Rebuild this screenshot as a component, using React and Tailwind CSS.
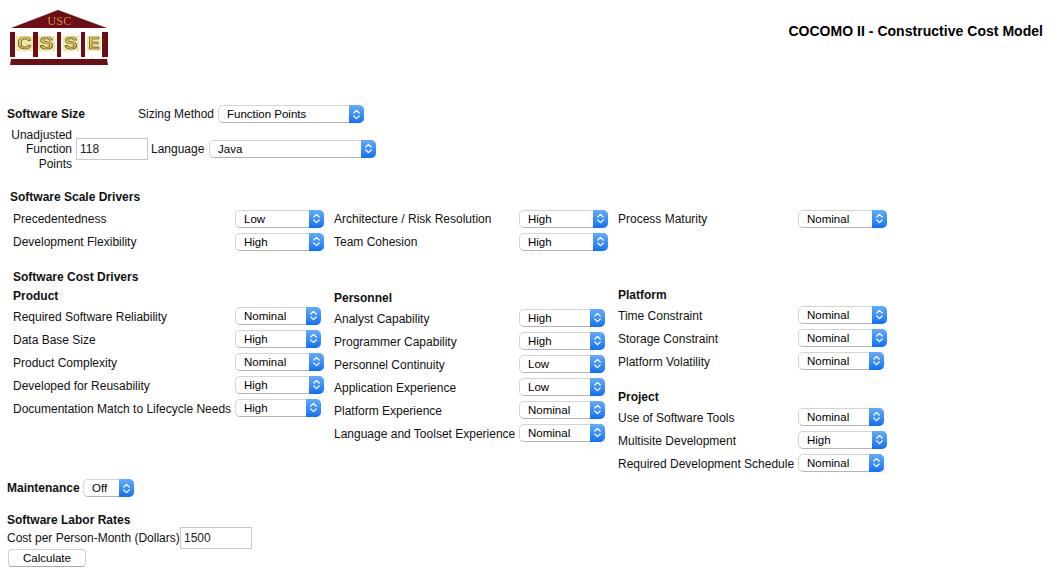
import React from "react";

const levels = ["Very Low", "Low", "Nominal", "High", "Very High"];

function Select({ value, options = levels, w = "w-[89px]", className = "" }) {
  return (
    <div className={`relative h-[18px] shrink-0 ${w} ${className}`}>
      <select
        defaultValue={value}
        className="block h-full w-full appearance-none rounded-[5px] border border-[#d4d4d4] border-b-[#b4b4b4] bg-white pl-2 text-[11.5px] text-black outline-none"
      >
        {options.map((o) => (
          <option key={o}>{o}</option>
        ))}
      </select>
      <div className="pointer-events-none absolute inset-y-0 right-0 flex w-[15px] items-center justify-center rounded-r-[5px] bg-gradient-to-b from-[#62acfb] to-[#0f6ff5]">
        <svg width="9" height="13" viewBox="0 0 9 13" fill="none" stroke="white" strokeWidth="1.3" strokeLinecap="round" strokeLinejoin="round">
          <path d="M1.8 5 L4.5 2.4 L7.2 5" />
          <path d="M1.8 8 L4.5 10.6 L7.2 8" />
        </svg>
      </div>
    </div>
  );
}

function Row({ label, value, labelW, narrow, up = true }) {
  return (
    <div className="flex h-[23px] items-center">
      <div className={`whitespace-nowrap ${labelW}`}>{label}</div>
      <Select value={value} w={narrow ? "w-[86px]" : "w-[89px]"} className={up ? "mb-[2px]" : ""} />
    </div>
  );
}

function Heading({ children, className = "" }) {
  return <div className={`h-[14px] font-bold leading-[14px] ${className}`}>{children}</div>;
}

function Logo() {
  const red = "#6d0f16";
  return (
    <svg width="100" height="58" viewBox="0 0 100 58" className="block">
      <defs>
        <filter id="soft"><feGaussianBlur stdDeviation="0.35" /></filter>
        <linearGradient id="g" x1="0" y1="0" x2="0" y2="1">
          <stop offset="0" stopColor="#f8e879" />
          <stop offset="1" stopColor="#e0b028" />
        </linearGradient>
      </defs>
      <g filter="url(#soft)">
        <path d="M1 18 L48 0 L97 18 Z" fill={red} />
        <text x="49.5" y="15" textAnchor="middle" fontFamily="'Liberation Serif', serif" fontSize="12.5" fill="#c9923a">USC</text>
        {[[0, 5], [23, 5], [47, 4], [71, 4], [92, 6]].map(([x, w]) => (
          <rect key={x} x={x} y="22" width={w} height="25" fill={red} />
        ))}
        {[[6, 17], [28, 17], [53, 16], [77, 14]].map(([x, w]) => (
          <rect key={x} x={x} y="26" width={w} height="15" fill="#f0e8a8" />
        ))}
        {[["C", 7.5, 14], ["S", 29.5, 14], ["S", 54.5, 13], ["E", 78.5, 11]].map(([c, x, len], i) => (
          <text key={i} x={x} y="39" textLength={len} lengthAdjust="spacingAndGlyphs" fontFamily="'Liberation Sans', sans-serif" fontWeight="700" fontSize="16.5" fill="url(#g)" stroke="#55512f" strokeWidth="0.7">{c}</text>
        ))}
        <path d="M1 49 L97 49 L98 55 L0 55 Z" fill={red} />
      </g>
    </svg>
  );
}

export default function App() {
  return (
    <div className="h-[573px] w-[1061px] overflow-hidden bg-white font-['Liberation_Sans',Arial,sans-serif] text-[12px] leading-[14px] text-[#111]">
      <header className="flex h-[96px] justify-between pl-[10px] pr-[18px] pt-[10px]">
        <Logo />
        <h1 className="mt-[13px] text-[14px] font-bold leading-4 tracking-[0.03px] text-black">COCOMO II - Constructive Cost Model</h1>
      </header>

      <div className="mt-[9px] flex h-[18px] items-center pl-[7px]">
        <div className="w-[131px] font-bold">Software Size</div>
        <div className="w-[80px]">Sizing Method</div>
        <Select value="Function Points" options={["Function Points", "Source Lines of Code"]} w="w-[146px]" />
      </div>

      <div className="mt-[4px] flex h-[43px] items-center">
        <div className="w-[72px] pl-[8px] pt-[2px] text-right leading-[14.5px]">Unadjusted Function Points</div>
        <input
          defaultValue="118"
          className="ml-[4px] h-[22px] w-[72px] border border-[#c8c8c8] px-[3px] text-[12px] text-[#222] outline-none"
        />
        <div className="ml-[3px] w-[58px]">Language</div>
        <Select value="Java" options={["Java", "C", "C++", "Python"]} w="w-[167px]" />
      </div>

      <Heading className="ml-[10px] mt-[19px] pt-px">Software Scale Drivers</Heading>
      <div className="mt-[4px] flex pl-[13px]">
        <div className="w-[321px]">
          <Row up={false} label="Precedentedness" value="Low" labelW="w-[222px]" />
          <Row up={false} label="Development Flexibility" value="High" labelW="w-[222px]" />
        </div>
        <div className="w-[284px]">
          <Row up={false} label="Architecture / Risk Resolution" value="High" labelW="w-[185px]" />
          <Row up={false} label="Team Cohesion" value="High" labelW="w-[185px]" />
        </div>
        <div>
          <Row up={false} label="Process Maturity" value="Nominal" labelW="w-[180px]" />
        </div>
      </div>

      <Heading className="ml-[13px] mt-[16px] pt-px">Software Cost Drivers</Heading>
      <div className="flex h-[192px] pl-[13px]">
        <div className="w-[321px] pt-[5px]">
          <Heading className="mb-[3px] pt-px">Product</Heading>
          <Row narrow label="Required Software Reliability" value="Nominal" labelW="w-[222px]" />
          <Row narrow label="Data Base Size" value="High" labelW="w-[222px]" />
          <Row label="Product Complexity" value="Nominal" labelW="w-[222px]" />
          <Row label="Developed for Reusability" value="High" labelW="w-[222px]" />
          <Row narrow label="Documentation Match to Lifecycle Needs" value="High" labelW="w-[222px]" />
        </div>
        <div className="w-[284px] pt-[7px]">
          <Heading className="mb-[3px] pt-px">Personnel</Heading>
          <Row narrow label="Analyst Capability" value="High" labelW="w-[185px]" />
          <Row narrow label="Programmer Capability" value="High" labelW="w-[185px]" />
          <Row narrow label="Personnel Continuity" value="Low" labelW="w-[185px]" />
          <Row narrow label="Application Experience" value="Low" labelW="w-[185px]" />
          <Row narrow label="Platform Experience" value="Nominal" labelW="w-[185px]" />
          <Row narrow label="Language and Toolset Experience" value="Nominal" labelW="w-[185px]" />
        </div>
        <div className="pt-[4px]">
          <Heading className="mb-[3px] pt-px">Platform</Heading>
          <Row label="Time Constraint" value="Nominal" labelW="w-[180px]" />
          <Row label="Storage Constraint" value="Nominal" labelW="w-[180px]" />
          <Row narrow label="Platform Volatility" value="Nominal" labelW="w-[180px]" />
          <Heading className="mb-[3px] mt-[16px] pt-px">Project</Heading>
          <Row narrow label="Use of Software Tools" value="Nominal" labelW="w-[180px]" />
          <Row label="Multisite Development" value="High" labelW="w-[180px]" />
          <Row narrow label="Required Development Schedule" value="Nominal" labelW="w-[180px]" />
        </div>
      </div>

      <div className="mt-[4px] flex h-[18px] items-center pl-[7px]">
        <div className="w-[76px] font-bold">Maintenance</div>
        <Select value="Off" options={["Off", "On"]} w="w-[51px]" />
      </div>

      <Heading className="ml-[7px] mt-[16px]">Software Labor Rates</Heading>
      <div className="flex h-[22px] items-center pl-[7px]">
        <div className="w-[173px] whitespace-nowrap">Cost per Person-Month (Dollars)</div>
        <input
          defaultValue="1500"
          className="h-[22px] w-[72px] border border-[#c8c8c8] px-[3px] text-[12px] text-[#222] outline-none"
        />
      </div>
      <button className="ml-[8px] block h-[18px] w-[78px] rounded-[4px] border border-[#d0d0d0] border-b-[#aaa] bg-white text-center text-[11.5px] leading-[16px] text-black">
        Calculate
      </button>
    </div>
  );
}
